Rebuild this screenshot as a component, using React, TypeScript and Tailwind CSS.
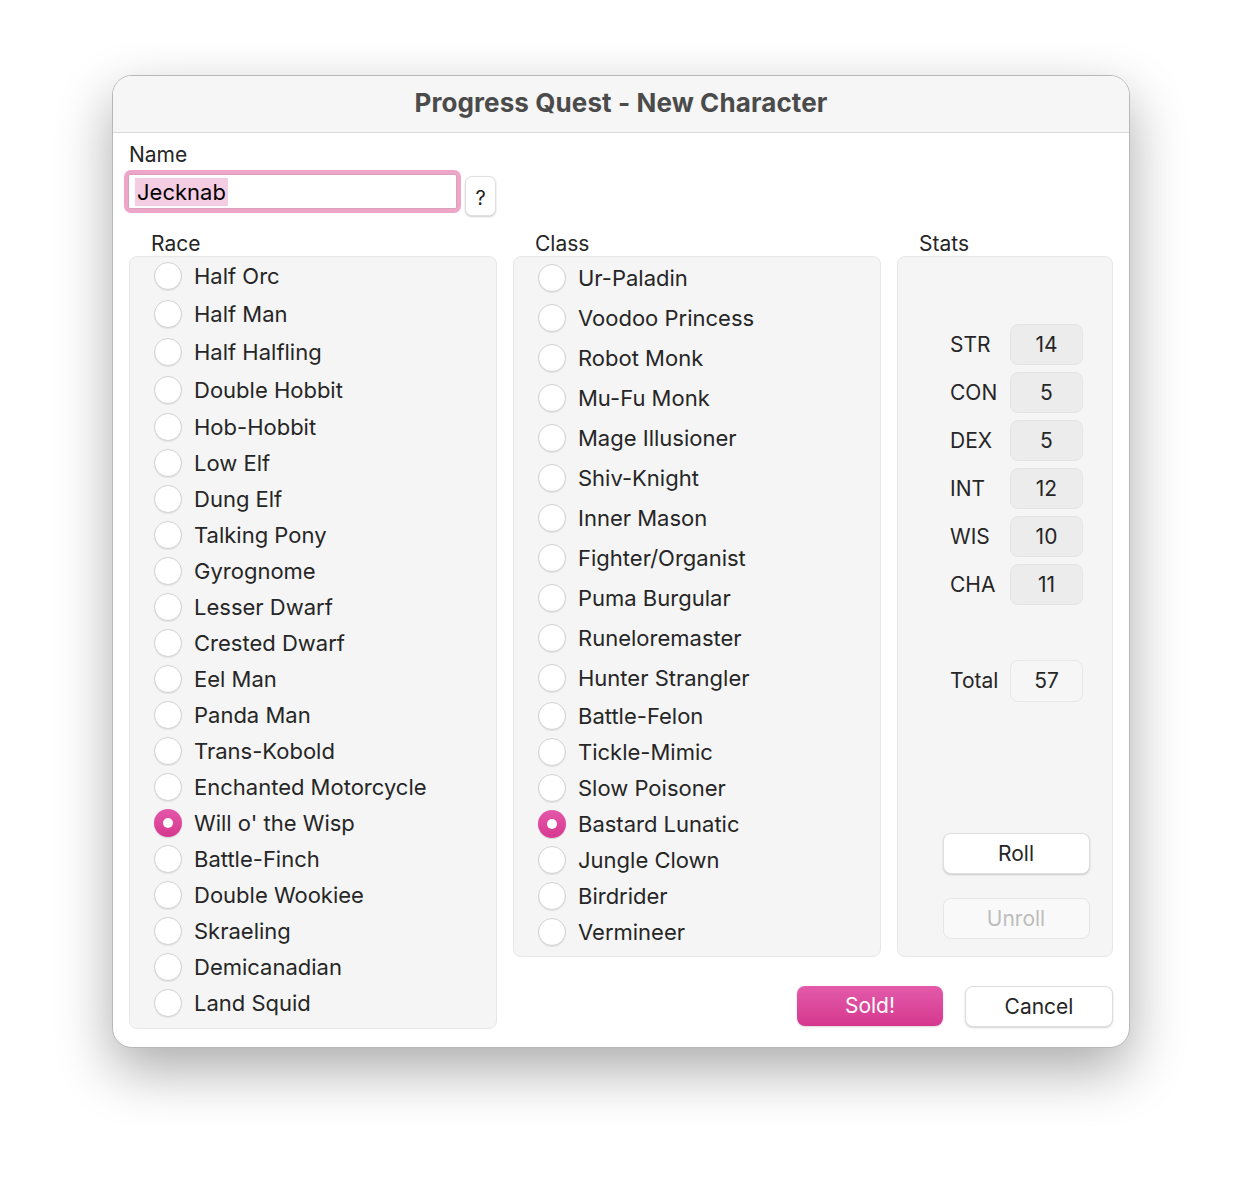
import React, { useState } from "react";

const races = [
    "Half Orc",
    "Half Man",
    "Half Halfling",
    "Double Hobbit",
    "Hob-Hobbit",
    "Low Elf",
    "Dung Elf",
    "Talking Pony",
    "Gyrognome",
    "Lesser Dwarf",
    "Crested Dwarf",
    "Eel Man",
    "Panda Man",
    "Trans-Kobold",
    "Enchanted Motorcycle",
    "Will o' the Wisp",
    "Battle-Finch",
    "Double Wookiee",
    "Skraeling",
    "Demicanadian",
    "Land Squid",
];

const classes = [
    "Ur-Paladin",
    "Voodoo Princess",
    "Robot Monk",
    "Mu-Fu Monk",
    "Mage Illusioner",
    "Shiv-Knight",
    "Inner Mason",
    "Fighter/Organist",
    "Puma Burgular",
    "Runeloremaster",
    "Hunter Strangler",
    "Battle-Felon",
    "Tickle-Mimic",
    "Slow Poisoner",
    "Bastard Lunatic",
    "Jungle Clown",
    "Birdrider",
    "Vermineer",
];

const stats = [
    { label: "STR", value: 14 },
    { label: "CON", value: 5 },
    { label: "DEX", value: 5 },
    { label: "INT", value: 12 },
    { label: "WIS", value: 10 },
    { label: "CHA", value: 11 },
];

const Radio = ({ checked }: { checked: boolean }) =>
    checked ? (
        <span className="w-[28px] h-[28px] rounded-full bg-gradient-to-b from-[#e457aa] to-[#d6378f] flex items-center justify-center shrink-0 shadow-[0_1px_1px_rgba(0,0,0,0.15)]">
            <span className="w-[10px] h-[10px] rounded-full bg-white" />
        </span>
    ) : (
        <span className="w-[28px] h-[28px] rounded-full bg-white border border-[#d2d2d2] shrink-0 shadow-[0_1px_1px_rgba(0,0,0,0.08)]" />
    );

const RadioList = ({
    items,
    selected,
    onSelect,
    tall,
    tallHeight,
}: {
    items: string[];
    selected: string;
    onSelect: (v: string) => void;
    tall: number;
    tallHeight: string;
}) => (
    <div className="flex flex-col">
        {items.map((item, i) => (
            <div
                key={item}
                onClick={() => onSelect(item)}
                className={`flex items-center gap-[12px] pl-[24px] cursor-default ${
                    i < tall ? tallHeight : "h-[36px]"
                }`}
            >
                <Radio checked={item === selected} />
                <span className="text-[22px] text-[#262626] leading-none">{item}</span>
            </div>
        ))}
    </div>
);

const App = () => {
    const [race, setRace] = useState("Will o' the Wisp");
    const [klass, setKlass] = useState("Bastard Lunatic");
    const total = stats.reduce((sum, s) => sum + s.value, 0);

    return (
        <div
            className="w-[1242px] h-[1196px] bg-white pt-[75px]"
            style={{ fontFamily: "Inter, 'Noto Sans', sans-serif" }}
        >
            <div className="mx-auto w-[1018px] h-[973px] rounded-[20px] bg-white overflow-hidden border border-[#b8b8b8] shadow-[0_22px_55px_rgba(0,0,0,0.33)] flex flex-col">
                {/* title bar */}
                <div className="h-[57px] shrink-0 bg-[#f6f6f6] border-b border-[#dadada] flex items-center justify-center pb-[4px]">
                    <span className="text-[26px] font-bold text-[#4b4b4b] tracking-[0.1px]">
                        Progress Quest - New Character
                    </span>
                </div>

                <div className="flex-1 px-[16px] pt-[9px]">
                    {/* name */}
                    <div className="text-[21px] text-[#262626] leading-[26px]">Name</div>
                    <div className="flex items-start gap-[4px] mt-[2px] -ml-[5px]">
                        <div className="w-[337px] h-[43px] rounded-[7px] bg-[#eda6c8] p-[4px]">
                            <div className="w-full h-full bg-white border border-[#d8a0bb] rounded-[2px] flex items-center pl-[6px]">
                                <span className="bg-[#f5cde2] text-[22px] text-black leading-[28px] px-[2px]">
                                    Jecknab
                                </span>
                            </div>
                        </div>
                        <button className="mt-[6px] w-[31px] h-[40px] rounded-[7px] bg-white border border-[#e0e0e0] shadow-[0_1px_2px_rgba(0,0,0,0.2)] text-[20px] text-[#222] flex items-center justify-center pt-[4px]">
                            ?
                        </button>
                    </div>

                    <div className="flex gap-[16px] mt-[15px]">
                        {/* race */}
                        <div className="w-[368px] flex flex-col">
                            <div className="pl-[22px] text-[21px] text-[#262626] leading-[26px] h-[26px]">Race</div>
                            <div className="-mt-[1px] h-[773px] rounded-[8px] bg-[#f5f5f5] border border-[#e7e7e7]">
                                <RadioList
                                    items={races}
                                    selected={race}
                                    onSelect={setRace}
                                    tall={4}
                                    tallHeight="h-[38px]"
                                />
                            </div>
                        </div>

                        <div className="flex flex-col">
                            <div className="flex gap-[16px]">
                                {/* class */}
                                <div className="w-[368px] flex flex-col">
                                    <div className="pl-[22px] text-[21px] text-[#262626] leading-[26px] h-[26px]">Class</div>
                                    <div className="-mt-[1px] h-[701px] rounded-[8px] bg-[#f5f5f5] border border-[#e7e7e7] pt-[1px]">
                                        <RadioList
                                            items={classes}
                                            selected={klass}
                                            onSelect={setKlass}
                                            tall={11}
                                            tallHeight="h-[40px]"
                                        />
                                    </div>
                                </div>

                                {/* stats */}
                                <div className="w-[216px] flex flex-col">
                                    <div className="pl-[22px] text-[21px] text-[#262626] leading-[26px] h-[26px]">Stats</div>
                                    <div className="-mt-[1px] h-[701px] rounded-[8px] bg-[#f5f5f5] border border-[#e7e7e7] flex flex-col">
                                        <div className="flex flex-col gap-[7px] mt-[67px]">
                                            {stats.map((s) => (
                                                <div key={s.label} className="flex items-center">
                                                    <span className="w-[60px] pl-[52px] box-content text-[21px] text-[#262626]">
                                                        {s.label}
                                                    </span>
                                                    <span className="w-[73px] h-[41px] rounded-[8px] bg-[#ececec] border border-[#e4e4e4] flex items-center justify-center text-[21px] text-[#262626]">
                                                        {s.value}
                                                    </span>
                                                </div>
                                            ))}
                                        </div>
                                        <div className="flex items-center mt-[55px]">
                                            <span className="w-[60px] pl-[52px] box-content text-[21px] text-[#262626]">
                                                Total
                                            </span>
                                            <span className="w-[73px] h-[42px] rounded-[8px] bg-[#f6f6f6] border border-[#e8e8e8] flex items-center justify-center text-[21px] text-[#262626]">
                                                {total}
                                            </span>
                                        </div>
                                        <div className="flex flex-col items-center gap-[24px] mt-[131px] pl-[22px]">
                                            <button className="w-[147px] h-[41px] rounded-[8px] bg-white border border-[#dedede] shadow-[0_1px_2px_rgba(0,0,0,0.18)] text-[21px] text-[#262626]">
                                                Roll
                                            </button>
                                            <button className="w-[147px] h-[41px] rounded-[8px] bg-[#f9f9f9] border border-[#e6e6e6] text-[21px] text-[#bdbdbd]">
                                                Unroll
                                            </button>
                                        </div>
                                    </div>
                                </div>
                            </div>

                            {/* actions */}
                            <div className="flex justify-end gap-[22px] mt-[29px]">
                                <button className="w-[146px] h-[40px] rounded-[8px] bg-gradient-to-b from-[#e35aaa] to-[#d5378e] text-white text-[21px] shadow-[0_1px_2px_rgba(0,0,0,0.15)]">
                                    Sold!
                                </button>
                                <button className="w-[148px] h-[41px] rounded-[8px] bg-white border border-[#dedede] shadow-[0_1px_2px_rgba(0,0,0,0.18)] text-[21px] text-[#262626]">
                                    Cancel
                                </button>
                            </div>
                        </div>
                    </div>
                </div>
            </div>
        </div>
    );
};

export default App;
